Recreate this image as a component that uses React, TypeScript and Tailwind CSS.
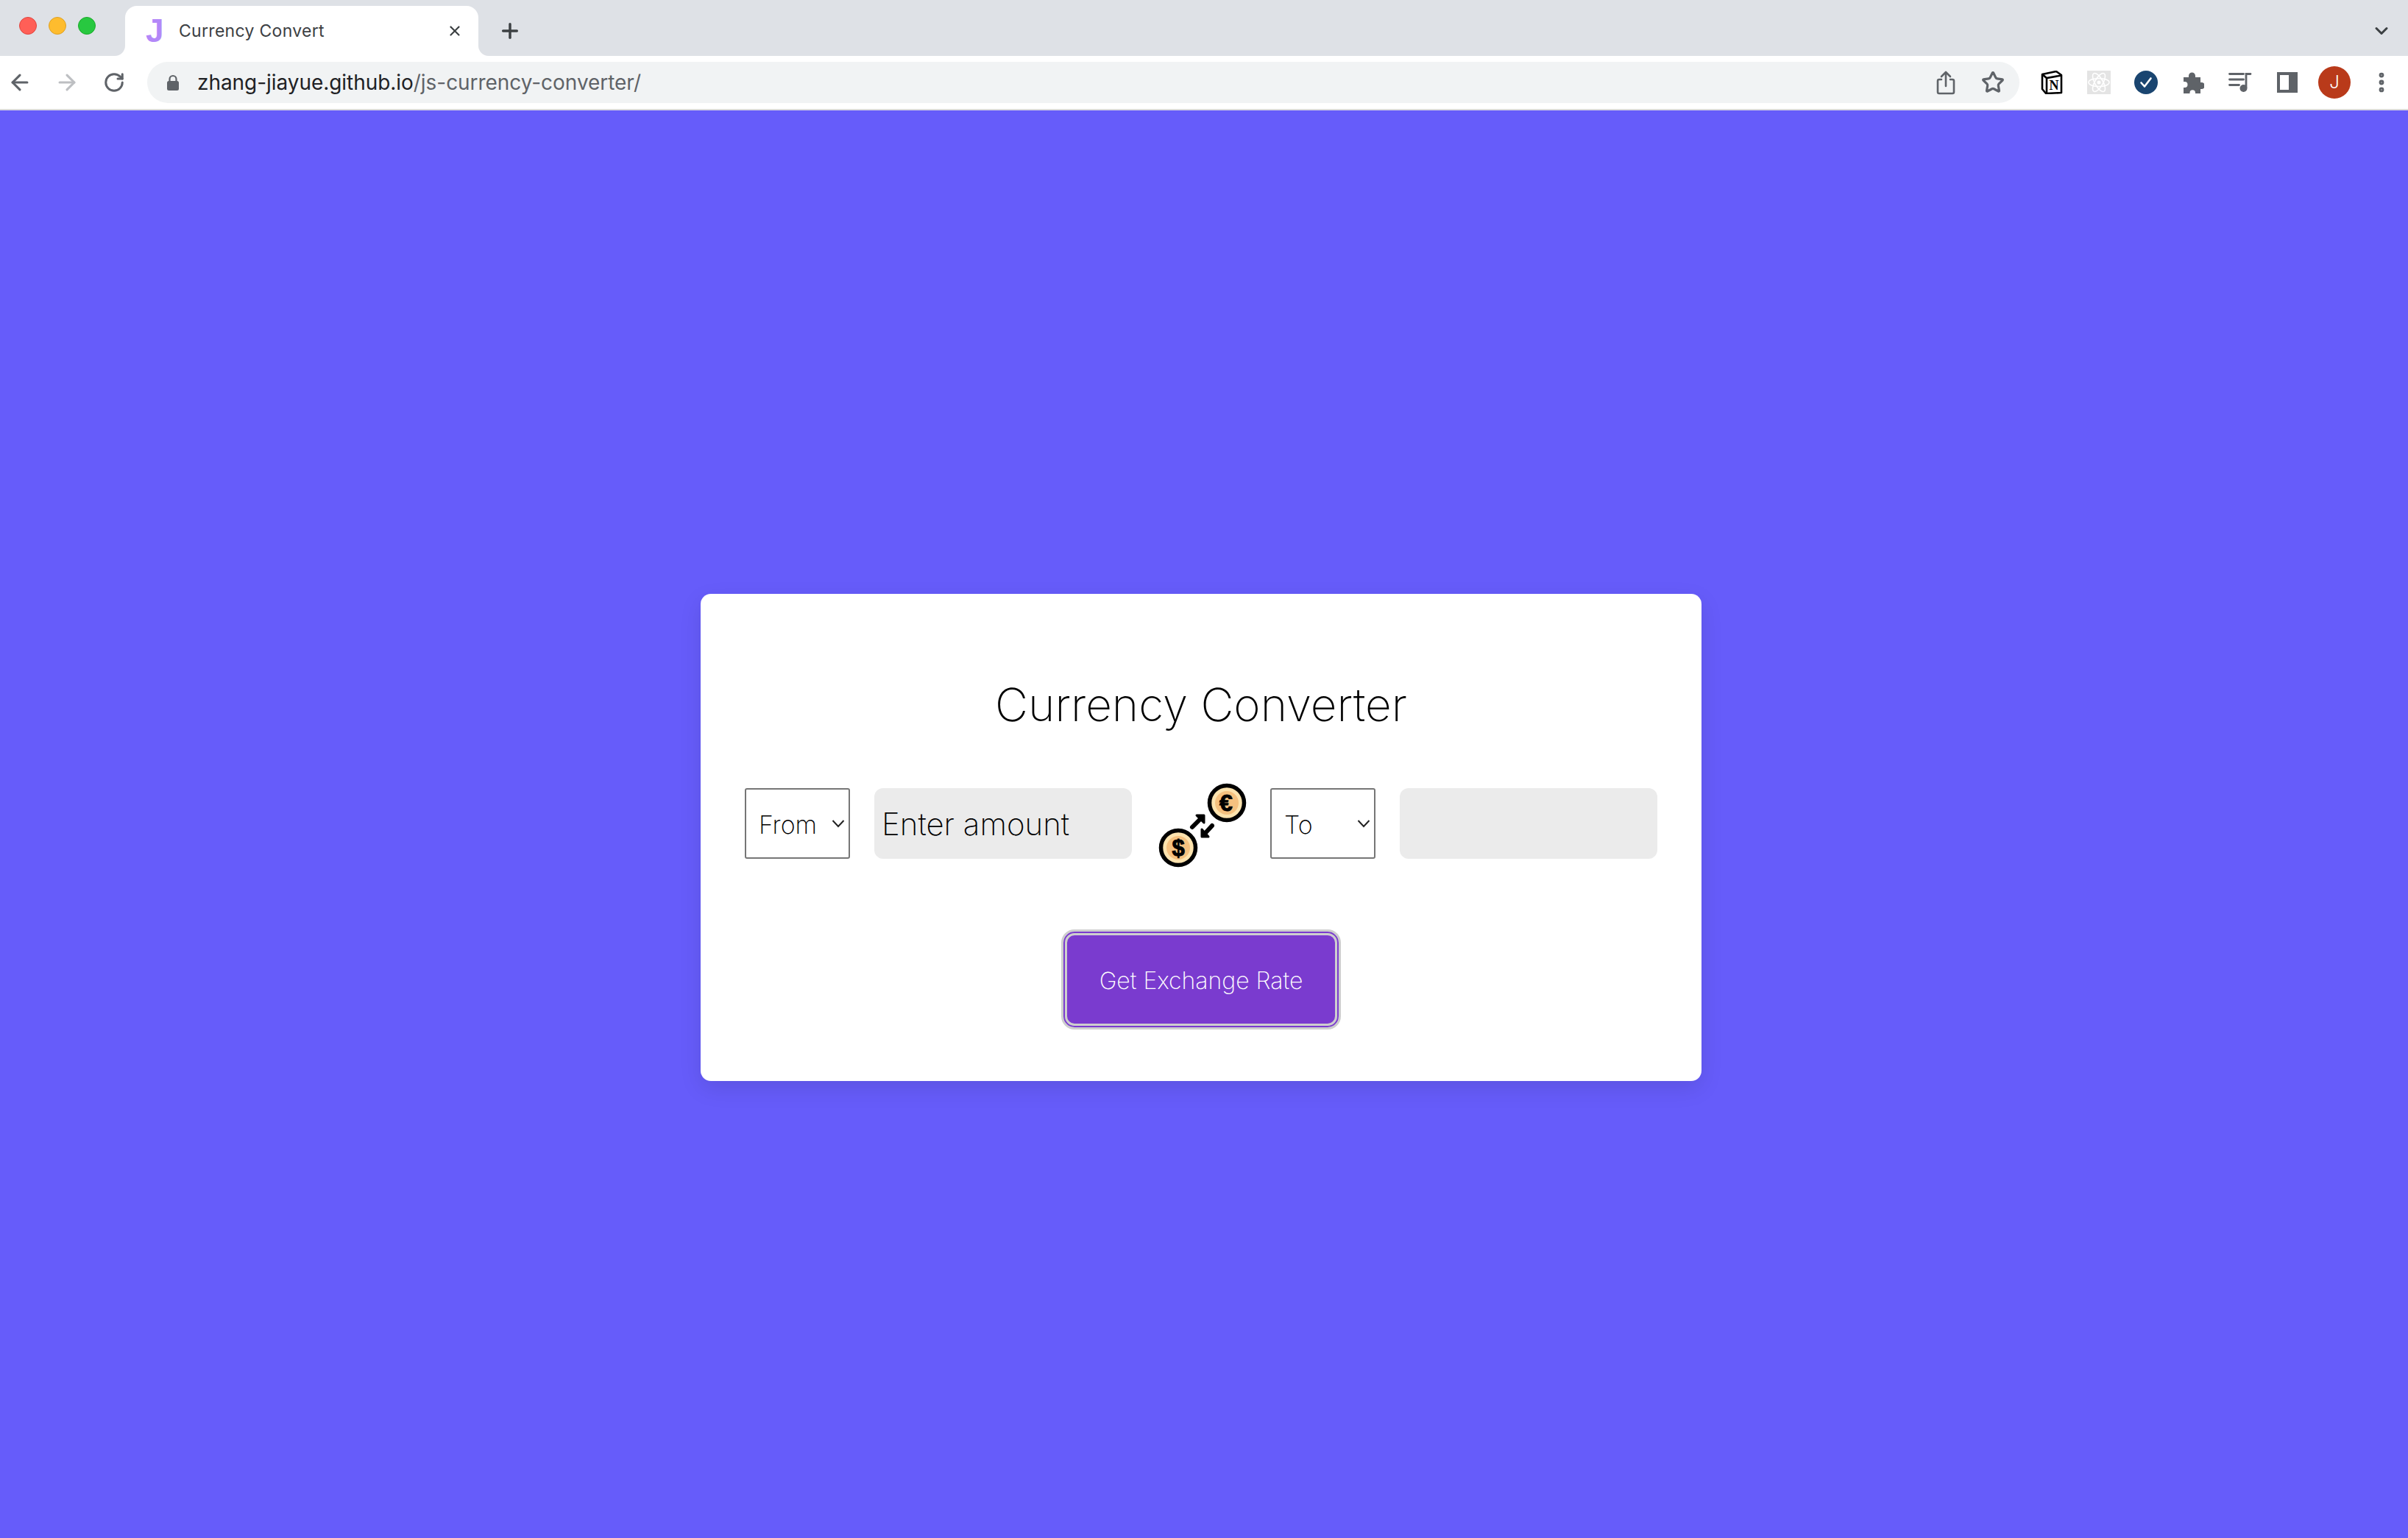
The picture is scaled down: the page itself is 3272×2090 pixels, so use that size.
import { ArrowLeft, ArrowRight, ChevronDown, MoreVertical, Plus, RotateCw, Star, X } from "lucide-react";

function LockIcon() {
  return (
    <svg width="18" height="22" viewBox="0 0 18 22" className="shrink-0">
      <path d="M4.500 10V6.500a4.500 4.500 0 0 1 9 0V10" fill="none" stroke="#5f6368" strokeWidth="2.200" />
      <rect x="1" y="9" width="16" height="13" rx="2.500" fill="#5f6368" />
    </svg>
  );
}

function ShareIcon() {
  return (
    <svg width="32" height="34" viewBox="0 0 32 34" fill="none" stroke="#5f6368" strokeWidth="2.6" strokeLinecap="round" strokeLinejoin="round">
      <path d="M10 13H7a2 2 0 0 0-2 2v15a2 2 0 0 0 2 2h18a2 2 0 0 0 2-2V15a2 2 0 0 0-2-2h-3" />
      <path d="M16 22V3M10 9l6-6 6 6" />
    </svg>
  );
}

function NotionIcon() {
  return (
    <svg width="30" height="32" viewBox="0 0 30 32">
      <path d="M2 5 21 1l7 5v24L7 31l-5-6z" fill="#fff" stroke="#000" strokeWidth="2.6" strokeLinejoin="round" />
      <path d="M2 5l6 5 20-3.500M8 10v21" fill="none" stroke="#000" strokeWidth="2.600" />
      <text x="18" y="26" textAnchor="middle" fontFamily="'Liberation Serif', serif" fontWeight="700" fontSize="18" fill="#000">N</text>
    </svg>
  );
}

function ReactIcon() {
  return (
    <div className="flex h-[32px] w-[32px] items-center justify-center bg-[#e4e4e4]">
      <svg width="30" height="30" viewBox="0 0 30 30" fill="none" stroke="#fff" strokeWidth="1.6">
        <ellipse cx="15" cy="15" rx="14" ry="5.500" />
        <ellipse cx="15" cy="15" rx="14" ry="5.500" transform="rotate(60 15 15)" />
        <ellipse cx="15" cy="15" rx="14" ry="5.500" transform="rotate(120 15 15)" />
        <circle cx="15" cy="15" r="2.500" fill="#fff" stroke="none" />
      </svg>
    </div>
  );
}

function CheckBadge() {
  return (
    <svg width="32" height="32" viewBox="0 0 32 32">
      <circle cx="16" cy="16" r="16" fill="#1a4570" />
      <path d="M9.500 16.500l4.500 5 8.500-11" fill="none" stroke="#fff" strokeWidth="2.600" strokeLinecap="round" strokeLinejoin="round" />
    </svg>
  );
}

function PuzzleIcon() {
  return (
    <svg width="30" height="30" viewBox="0 0 30 30" fill="#5f6368">
      <path d="M2 8h7V6a4.500 4.500 0 0 1 9 0v2h7v7h1.500a4.500 4.500 0 0 1 0 9H25v6h-7v-1.500a3.800 3.800 0 0 0-7.500 0V30H2v-8h1.500a4 4 0 0 0 0-8H2z" />
    </svg>
  );
}

function QueueIcon() {
  return (
    <svg width="32" height="28" viewBox="0 0 32 28" fill="none" stroke="#5f6368" strokeWidth="2.800" strokeLinecap="round">
      <path d="M1.500 2.500h19M1.500 10h19M1.500 17.500h13" />
      <path d="M24 21V2.500h6" />
      <circle cx="20.500" cy="22" r="3.600" fill="#5f6368" />
    </svg>
  );
}

function PanelIcon() {
  return (
    <div className="flex h-[28px] w-[28px] justify-start border-[4px] border-r-[12px] border-[#5f6368] bg-white" />
  );
}

// the little inward curves at the foot of the active tab
function TabFlare({ side }: { side: "left" | "right" }) {
  return (
    <div className={`absolute bottom-0 h-[14px] w-[14px] bg-white ${side === "left" ? "-left-[14px]" : "-right-[14px]"}`}>
      <div className={`h-full w-full bg-[#dee1e6] ${side === "left" ? "rounded-br-[14px]" : "rounded-bl-[14px]"}`} />
    </div>
  );
}

function BrowserChrome() {
  return (
    <header className="font-['Inter',sans-serif]">
      <div className="flex h-[76px] items-end bg-[#dee1e6]">
        <div className="flex h-[70px] w-[170px] items-start gap-[16px] pl-[26px] pt-[17px]">
          <span className="h-[24px] w-[24px] rounded-full border border-[#e0443e] bg-[#ff5f57]" />
          <span className="h-[24px] w-[24px] rounded-full border border-[#dea123] bg-[#febc2e]" />
          <span className="h-[24px] w-[24px] rounded-full border border-[#1aab29] bg-[#28c840]" />
        </div>
        <div className="relative flex h-[68px] w-[480px] items-center rounded-t-[16px] bg-white pl-[28px] pr-[21px]">
          <TabFlare side="left" />
          <span className="w-[45px] font-['Liberation_Sans',sans-serif] text-[44px] font-bold leading-none text-[#b388f8]">J</span>
          <span className="flex-1 text-[23px] tracking-[0.3px] text-[#3c4043]">Currency Convert</span>
          <X size={22} color="#3c4043" strokeWidth={2.4} />
          <TabFlare side="right" />
        </div>
        <div className="flex h-[68px] flex-1 items-center justify-between pl-[27px] pr-[22px]">
          <Plus size={32} color="#3c4043" strokeWidth={2.6} />
          <ChevronDown size={28} color="#3c4043" strokeWidth={2.6} />
        </div>
      </div>
      <div className="flex h-[74px] items-center border-b-[2px] border-[#dcdcdc] bg-white">
        <div className="-ml-[5px] flex w-[205px] items-center">
          <span className="flex w-[64px] justify-center"><ArrowLeft size={34} color="#5f6368" strokeWidth={2.2} /></span>
          <span className="flex w-[64px] justify-center"><ArrowRight size={34} color="#bdbfc2" strokeWidth={2.2} /></span>
          <span className="flex w-[64px] justify-center"><RotateCw size={30} color="#5f6368" strokeWidth={2.4} /></span>
        </div>
        <div className="flex h-[56px] w-[2544px] items-center rounded-full bg-[#f1f3f4] pl-[26px] pr-[4px]">
          <LockIcon />
          <span className="ml-[24px] flex-1 text-[28px] tracking-[-0.05px] text-[#5f6368]">
            <span className="text-[#202124]">zhang-jiayue.github.io</span>/js-currency-converter/
          </span>
          <span className="flex w-[64px] justify-center"><ShareIcon /></span>
          <span className="flex w-[64px] justify-center"><Star size={32} color="#5f6368" strokeWidth={2.4} /></span>
        </div>
        <div className="ml-[12px] flex items-center">
          <span className="flex w-[64px] justify-center"><NotionIcon /></span>
          <span className="flex w-[64px] justify-center"><ReactIcon /></span>
          <span className="flex w-[64px] justify-center"><CheckBadge /></span>
          <span className="flex w-[64px] justify-center"><PuzzleIcon /></span>
          <span className="flex w-[64px] justify-center"><QueueIcon /></span>
          <span className="flex w-[64px] justify-center"><PanelIcon /></span>
          <span className="flex w-[64px] justify-center">
            <span className="flex h-[44px] w-[44px] items-center justify-center rounded-full bg-[#b93a1a] text-[24px] font-light text-white">J</span>
          </span>
          <span className="flex w-[64px] justify-center"><MoreVertical size={34} color="#5f6368" strokeWidth={2.8} /></span>
        </div>
      </div>
    </header>
  );
}

function CoinsIcon() {
  return (
    <svg width="122" height="122" viewBox="0 0 122 122" className="shrink-0 overflow-visible">
      <circle cx="96" cy="33" r="23.500" fill="#fde3ae" stroke="#000" strokeWidth="5.500" />
      <circle cx="96" cy="33" r="16" fill="#f5c17f" />
      <text x="95" y="44" textAnchor="middle" fontFamily="'Liberation Sans', sans-serif" fontWeight="700" fontSize="32" stroke="#000" strokeWidth="1" fill="#000">€</text>
      <circle cx="30" cy="94" r="23.500" fill="#fde3ae" stroke="#000" strokeWidth="5.500" />
      <circle cx="30" cy="94" r="16" fill="#f5c17f" />
      <text x="30" y="105" textAnchor="middle" fontFamily="'Liberation Sans', sans-serif" fontWeight="700" fontSize="31" stroke="#000" strokeWidth="1" fill="#000">$</text>
      <path d="M49 66l13-13" fill="none" stroke="#000" strokeWidth="6" strokeLinecap="round" />
      <path d="M55 50h10v10z" fill="#000" stroke="#000" strokeWidth="3" strokeLinejoin="round" />
      <path d="M76 64L65 76" fill="none" stroke="#000" strokeWidth="6" strokeLinecap="round" />
      <path d="M62 69v10h9z" fill="#000" stroke="#000" strokeWidth="3" strokeLinejoin="round" />
    </svg>
  );
}

function CurrencySelect({ label }: { label: string }) {
  return (
    <div className="relative shrink-0">
      <select className="block h-[96px] w-[143px] appearance-none rounded-[3px] border-[2px] border-[#767676] bg-white pl-[17px] pt-[2px] text-[34px] font-extralight text-black outline-none">
        <option>{label}</option>
      </select>
      <svg width="18" height="12" viewBox="0 0 18 12" fill="none" stroke="#222" strokeWidth="2" className="pointer-events-none absolute right-[7px] top-[42px]">
        <path d="M1.500 2l7.500 8 7.500-8" />
      </svg>
    </div>
  );
}

export default function App() {
  return (
    <div className="flex min-h-screen flex-col bg-[#665cfa]">
      <BrowserChrome />
      <main className="flex flex-1 items-center justify-center pr-[8px] pt-[36px]">
        <div className="w-[1360px] rounded-[14px] bg-white px-[60px] pb-[70px] pt-[103px] font-['Inter',sans-serif] shadow-[0_10px_30px_rgba(0,0,0,0.1)]">
          <h1 className="mb-[52px] text-center text-[62px] font-extralight leading-[96px] text-black">Currency Converter</h1>
          <div className="flex h-[122px] items-center gap-[33px]">
            <CurrencySelect label="From" />
            <input
              placeholder="Enter amount"
              className="h-[96px] w-[350px] shrink-0 rounded-[12px] bg-[#ebebeb] pl-[10px] text-[42px] font-extralight text-black outline-none placeholder:text-black"
            />
            <CoinsIcon />
            <CurrencySelect label="To" />
            <input className="h-[96px] w-[350px] shrink-0 rounded-[12px] bg-[#ebebeb] outline-none" />
          </div>
          <div className="mt-[83px] flex justify-center">
            <button className="h-[136px] w-[380px] rounded-[18px] border-[3px] border-[#cecece] bg-[#7a3bcf] pt-[4px] text-[32px] font-extralight text-white shadow-[inset_0_0_0_2px_#7a3bcf,inset_0_0_0_5px_#cecece]">
              Get Exchange Rate
            </button>
          </div>
        </div>
      </main>
    </div>
  );
}
